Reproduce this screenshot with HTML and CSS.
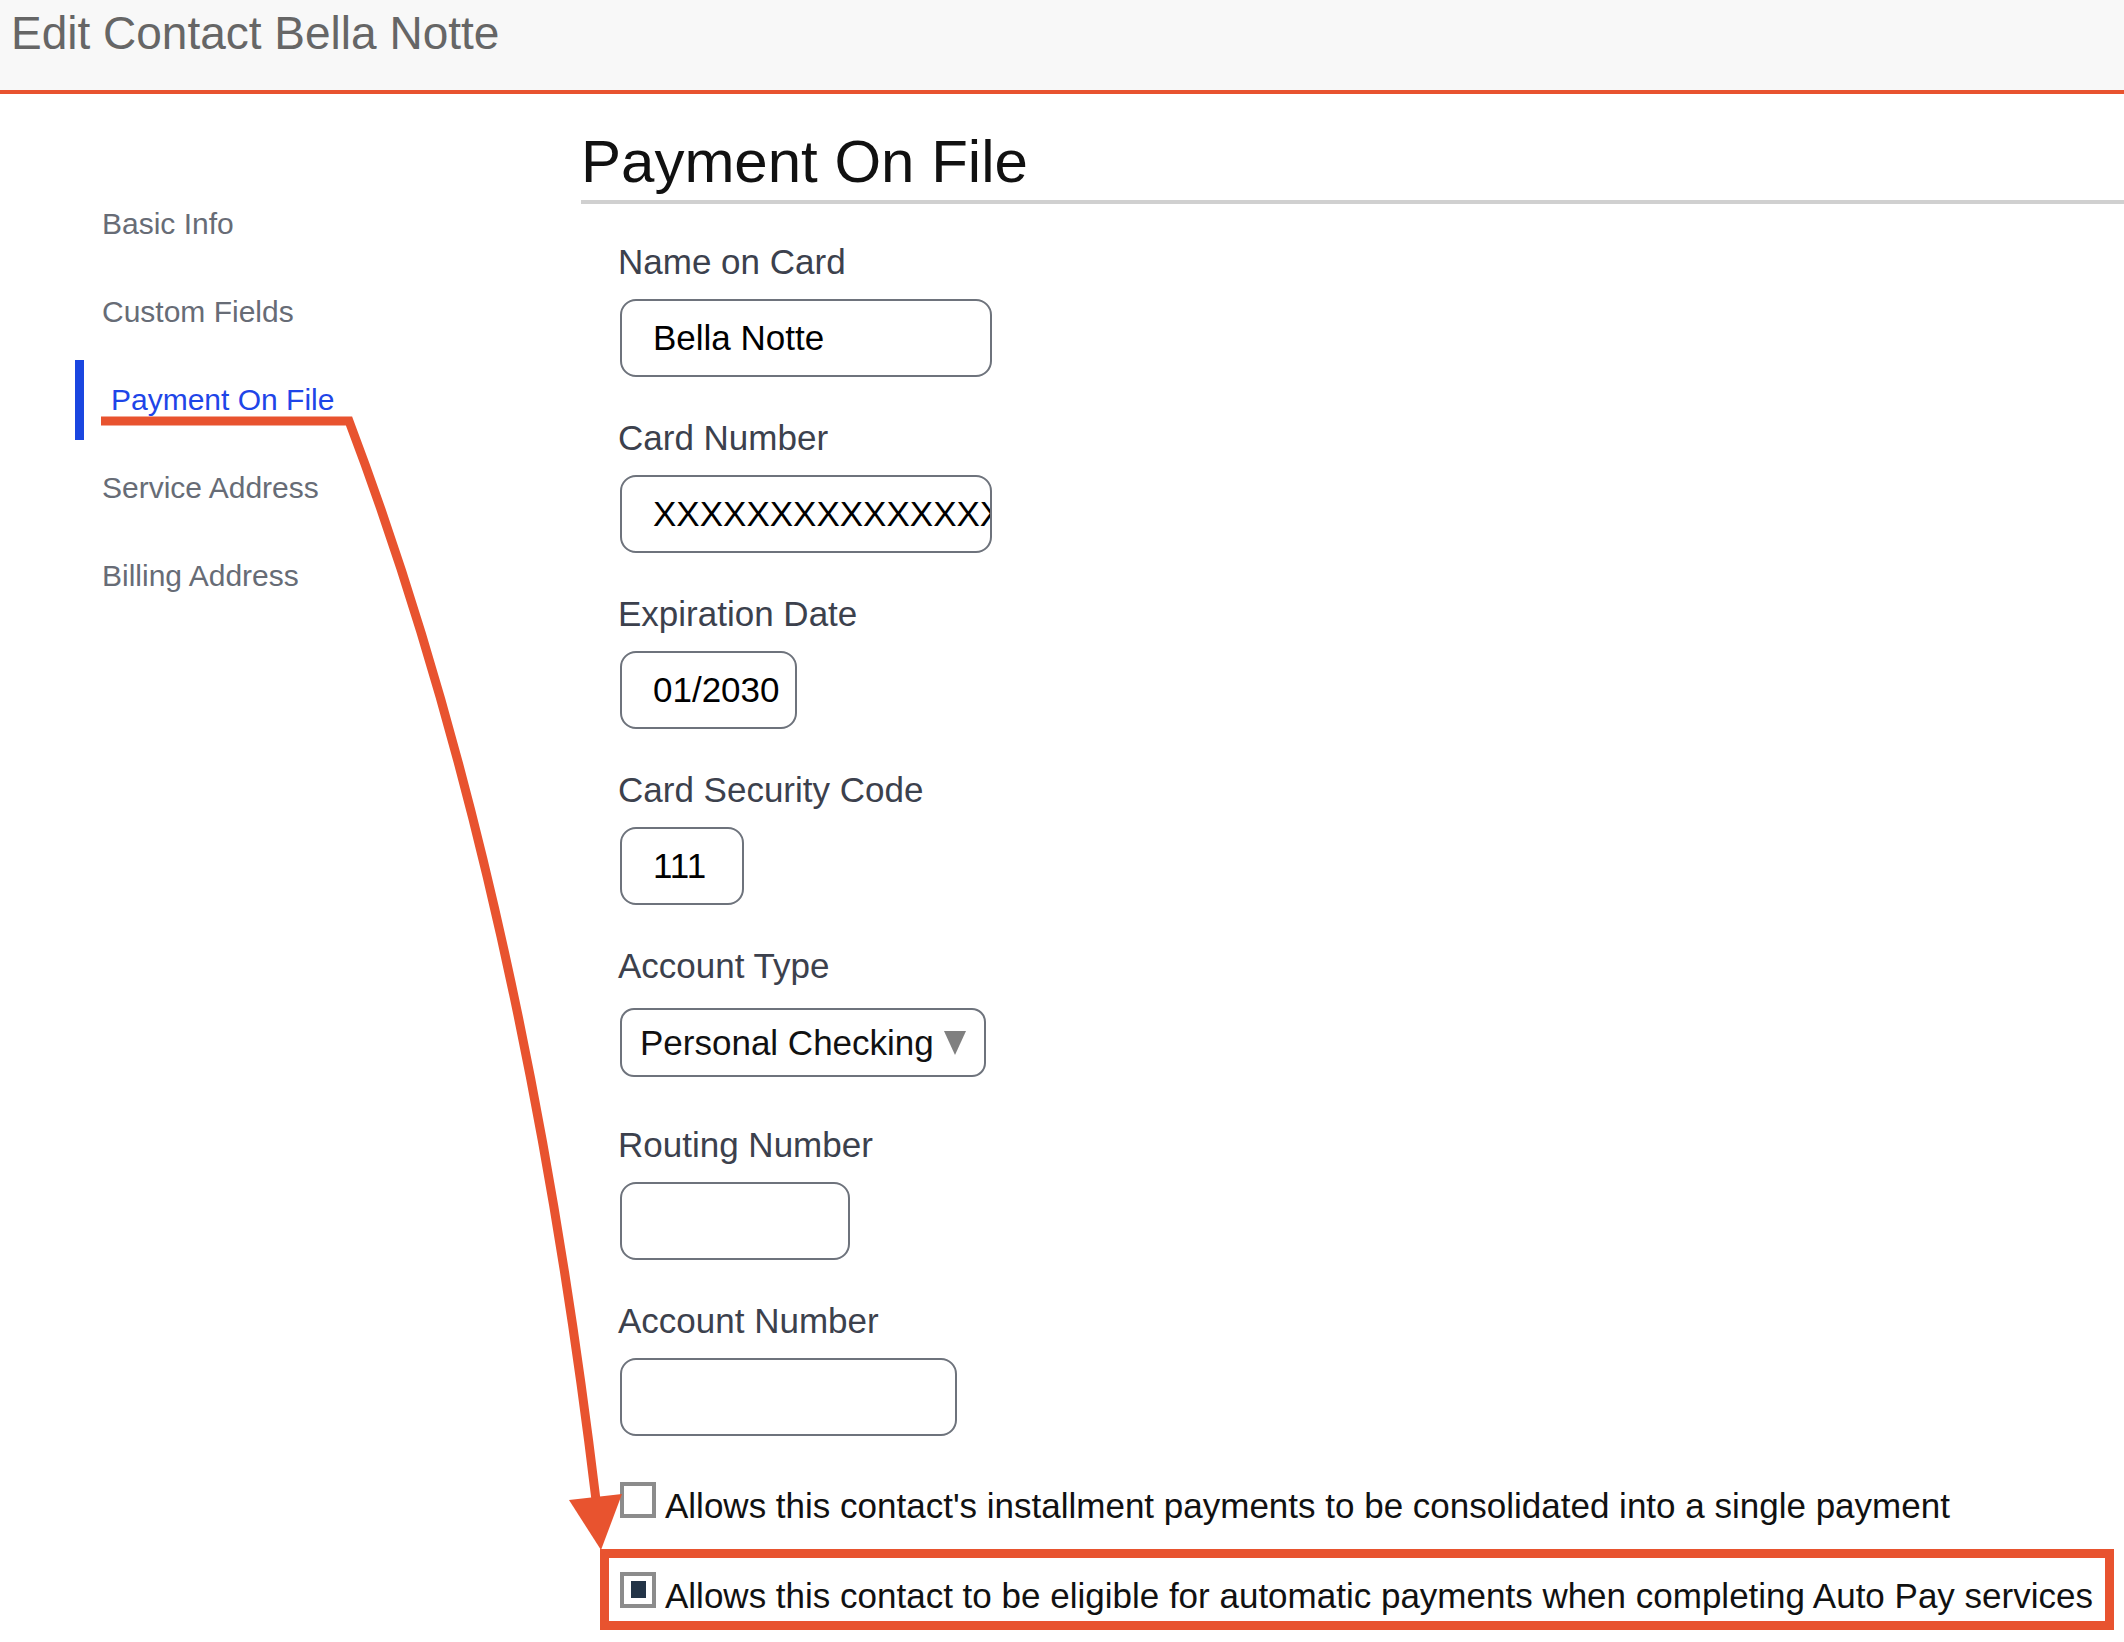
FILE: index.html
```html
<!DOCTYPE html>
<html lang="en">
<head>
    <meta charset="UTF-8">
    <meta name="viewport" content="width=device-width, initial-scale=1.0">
    <title>Edit Contact</title>
    <link rel="stylesheet" href="styles.css">
</head>
<body>
    <header class="topbar">
        <h1 class="topbar-title">Edit Contact Bella Notte</h1>
    </header>
    <div class="layout">
        <nav class="sidenav">
            <a class="nav-item">Basic Info</a>
            <a class="nav-item">Custom Fields</a>
            <a class="nav-item active">Payment On File</a>
            <a class="nav-item">Service Address</a>
            <a class="nav-item">Billing Address</a>
        </nav>
        <main class="content">
            <h2 class="section-title">Payment On File</h2>
            <form class="fields">
                <div class="field">
                    <label>Name on Card</label>
                    <input class="text-input w-name" type="text" value="Bella Notte">
                </div>
                <div class="field">
                    <label>Card Number</label>
                    <input class="text-input w-card" type="text" value="XXXXXXXXXXXXXXXX">
                </div>
                <div class="field">
                    <label>Expiration Date</label>
                    <input class="text-input w-exp" type="text" value="01/2030">
                </div>
                <div class="field">
                    <label>Card Security Code</label>
                    <input class="text-input w-csc" type="text" value="111">
                </div>
                <div class="field select-field">
                    <label>Account Type</label>
                    <div class="select-box">
                        <span>Personal Checking</span>
                        <svg class="select-arrow" width="22" height="24" viewBox="0 0 22 24"><polygon points="0,0 22,0 11,24" fill="#808080"/></svg>
                    </div>
                </div>
                <div class="field">
                    <label>Routing Number</label>
                    <input class="text-input w-routing" type="text" value="">
                </div>
                <div class="field">
                    <label>Account Number</label>
                    <input class="text-input w-account" type="text" value="">
                </div>
                <div class="check-row">
                    <span class="check-box"></span>
                    <span class="check-text">Allows this contact's installment payments to be consolidated into a single payment</span>
                </div>
                <div class="check-row highlighted">
                    <span class="check-box checked"></span>
                    <span class="check-text">Allows this contact to be eligible for automatic payments when completing Auto Pay services</span>
                </div>
            </form>
        </main>
    </div>
    <svg class="annotation" width="2124" height="1642" viewBox="0 0 2124 1642">
        <path d="M101 421 L349 421 Q521 875 596 1500" fill="none" stroke="#e8532f" stroke-width="9"/>
        <polygon points="569,1500 622,1494 601,1550" fill="#e8532f"/>
    </svg>
</body>
</html>
```

FILE: styles.css
```css
body {
    margin: 0;
    background: #fff;
    font-family: "Liberation Sans", Arial, sans-serif;
    position: relative;
}
.topbar {
    height: 90px;
    background-color: #f8f8f8;
    border-bottom: 4px solid #e8532f;
}
.topbar-title {
    margin: 0;
    padding: 10px 11px 0;
    font-size: 46px;
    line-height: 46px;
    font-weight: normal;
    color: #666;
}
.layout {
    display: flex;
}
.sidenav {
    width: 581px;
    flex-shrink: 0;
    padding-top: 90px;
    display: flex;
    flex-direction: column;
    gap: 8px;
}
.nav-item {
    margin-left: 75px;
    padding: 20px 0 20px 27px;
    font-size: 30px;
    line-height: 40px;
    color: #676c76;
}
.nav-item.active {
    border-left: 9px solid #1a46e0;
    color: #1e45e8;
}
.content {
    flex: 1;
}
.section-title {
    margin: 33px 0 0;
    padding-bottom: 3px;
    font-size: 60px;
    line-height: 70px;
    font-weight: normal;
    color: #111;
    border-bottom: 4px solid #d0d0d0;
}
.fields {
    margin-top: 38px;
    padding-left: 37px;
}
.field {
    display: flex;
    flex-direction: column;
    align-items: flex-start;
    margin-bottom: 41px;
}
.field label {
    font-size: 35px;
    line-height: 40px;
    color: #3c414d;
    margin-bottom: 17px;
}
.text-input {
    box-sizing: border-box;
    height: 78px;
    margin: 0 0 0 2px;
    padding: 0 0 0 31px;
    border: 2px solid #6e737c;
    border-radius: 16px;
    font-family: "Liberation Sans", Arial, sans-serif;
    font-size: 35px;
    color: #000;
    background: #fff;
    outline: none;
}
.w-name { width: 372px; }
.w-card { width: 372px; }
.w-exp { width: 177px; }
.w-csc { width: 124px; }
.w-routing { width: 230px; }
.w-account { width: 337px; }
.select-field {
    margin-bottom: 48px;
}
.select-field label {
    margin-bottom: 22px;
}
.select-box {
    box-sizing: border-box;
    width: 366px;
    height: 69px;
    margin-left: 2px;
    padding-left: 18px;
    display: flex;
    align-items: center;
    border: 2px solid #6e737c;
    border-radius: 14px;
    font-size: 35px;
    color: #111;
}
.select-arrow {
    margin-left: 10px;
}
.check-row {
    display: flex;
    align-items: center;
    height: 46px;
}
.check-box {
    box-sizing: border-box;
    width: 36px;
    height: 36px;
    margin-left: 2px;
    border: 4px solid #8c8c8c;
    background: #fff;
    display: flex;
    align-items: center;
    justify-content: center;
    flex-shrink: 0;
}
.check-box.checked::after {
    content: "";
    width: 15px;
    height: 17px;
    background: #233447;
}
.check-text {
    margin-left: 9px;
    padding-top: 12px;
    font-size: 35px;
    color: #111;
    white-space: nowrap;
}
.highlighted {
    box-sizing: border-box;
    width: 1514px;
    height: 81px;
    margin: 26px 0 0 -18px;
    padding-left: 9px;
    border: 9px solid #e8532f;
}
.annotation {
    position: absolute;
    top: 0;
    left: 0;
    pointer-events: none;
}
```
